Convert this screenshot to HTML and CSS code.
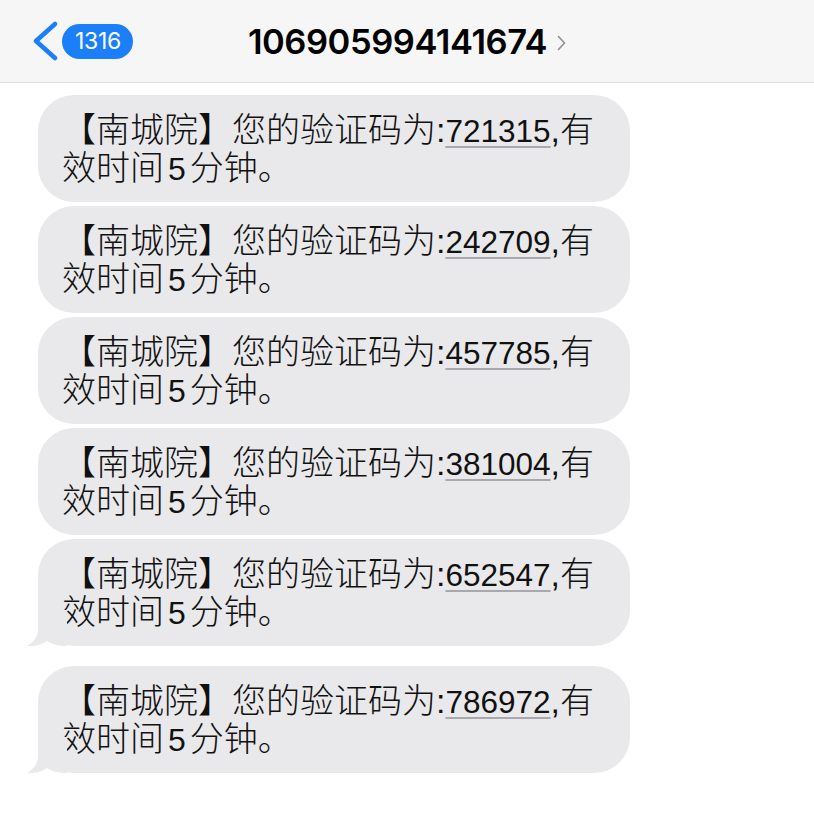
FILE: index.html
```html
<!DOCTYPE html>
<html lang="zh-CN">
<head>
<meta charset="utf-8">
<title>106905994141674</title>
<link rel="stylesheet" href="styles.css">
</head>
<body>
<header class="nav">
  <div class="nav-left">
    <svg class="back-chevron" width="28" height="40" viewBox="0 0 28 40" aria-hidden="true">
      <path d="M24 3 L5 20 L24 37" fill="none" stroke="#1a7ff8" stroke-width="4.5" stroke-linecap="round" stroke-linejoin="round"/>
    </svg>
    <span class="badge">1316</span>
  </div>
  <div class="nav-title">
    <span class="title-text">106905994141674</span>
    <svg class="title-chevron" width="9" height="16" viewBox="0 0 9 16" aria-hidden="true">
      <path d="M1.5 1.5 L7.5 8 L1.5 14.5" fill="none" stroke="#8e8e93" stroke-width="1.6" stroke-linecap="round" stroke-linejoin="round"/>
    </svg>
  </div>
  <div class="nav-right"></div>
</header>

<main class="thread">
  <div class="bubble">【南城院】您的验证码为:<span class="code">721315</span>,有效时间<span class="num">5</span>分钟。</div>
  <div class="bubble">【南城院】您的验证码为:<span class="code">242709</span>,有效时间<span class="num">5</span>分钟。</div>
  <div class="bubble">【南城院】您的验证码为:<span class="code">457785</span>,有效时间<span class="num">5</span>分钟。</div>
  <div class="bubble">【南城院】您的验证码为:<span class="code">381004</span>,有效时间<span class="num">5</span>分钟。</div>
  <div class="bubble bubble-tail">【南城院】您的验证码为:<span class="code">652547</span>,有效时间<span class="num">5</span>分钟。<svg class="tail" width="40" height="36" viewBox="0 0 40 36" aria-hidden="true"><path d="M11 0 L11 18 C11 27 7 32 0 36 C9 36.5 15 34.5 19.5 31 C25 34 31 36 40 36 L40 0 Z" fill="#e9e9eb"/></svg></div>
  <div class="bubble bubble-tail bubble-last">【南城院】您的验证码为:<span class="code">786972</span>,有效时间<span class="num">5</span>分钟。<svg class="tail" width="40" height="36" viewBox="0 0 40 36" aria-hidden="true"><path d="M11 0 L11 18 C11 27 7 32 0 36 C9 36.5 15 34.5 19.5 31 C25 34 31 36 40 36 L40 0 Z" fill="#e9e9eb"/></svg></div>
</main>
</body>
</html>
```

FILE: styles.css
```css
html, body {
  margin: 0;
  padding: 0;
  background: #ffffff;
}

body {
  font-family: "Liberation Sans", "Noto Sans CJK SC", sans-serif;
  color: #000;
}

.nav {
  height: 82px;
  background: #f6f6f6;
  border-bottom: 1px solid #dcdcde;
  display: grid;
  grid-template-columns: 1fr auto 1fr;
  align-items: center;
}

.nav-left {
  display: flex;
  align-items: center;
  padding-left: 31px;
  gap: 3px;
}

.back-chevron {
  display: block;
}

.badge {
  display: inline-flex;
  align-items: center;
  justify-content: center;
  height: 35px;
  padding: 0 12px 0 13px;
  border-radius: 18px;
  background: #1a7ff8;
  color: #fff;
  font-family: Inter, "Liberation Sans", sans-serif;
  font-size: 23px;
  letter-spacing: -0.3px;
}

.nav-title {
  display: flex;
  align-items: center;
  gap: 10px;
  padding-left: 0;
}

.title-text {
  font-family: Inter, "Liberation Sans", sans-serif;
  font-weight: 600;
  font-size: 34.5px;
  letter-spacing: -0.45px;
}

.title-chevron {
  display: block;
  margin-top: 3px;
}

.thread {
  display: flex;
  flex-direction: column;
  align-items: flex-start;
  gap: 4px;
  padding: 12px 0 40px 38px;
}

.bubble {
  position: relative;
  box-sizing: border-box;
  width: fit-content;
  max-width: 592px;
  height: 107px;
  background: #e9e9eb;
  border-radius: 36px;
  padding: 16px 26px 0 24px;
  font-size: 34px;
  font-weight: 300;
  line-height: 38px;
  color: #111;
}

.bubble-last {
  margin-top: 16px;
}

.code {
  font-size: 31.5px;
  line-height: 1;
  text-decoration: underline;
  text-decoration-color: #a9a9ad;
  text-decoration-thickness: 1.5px;
  text-underline-offset: 4px;
}

.num {
  font-size: 32px;
  line-height: 1;
  padding: 0 4px;
}

.tail {
  position: absolute;
  left: -11px;
  bottom: 0;
  display: block;
}
```
